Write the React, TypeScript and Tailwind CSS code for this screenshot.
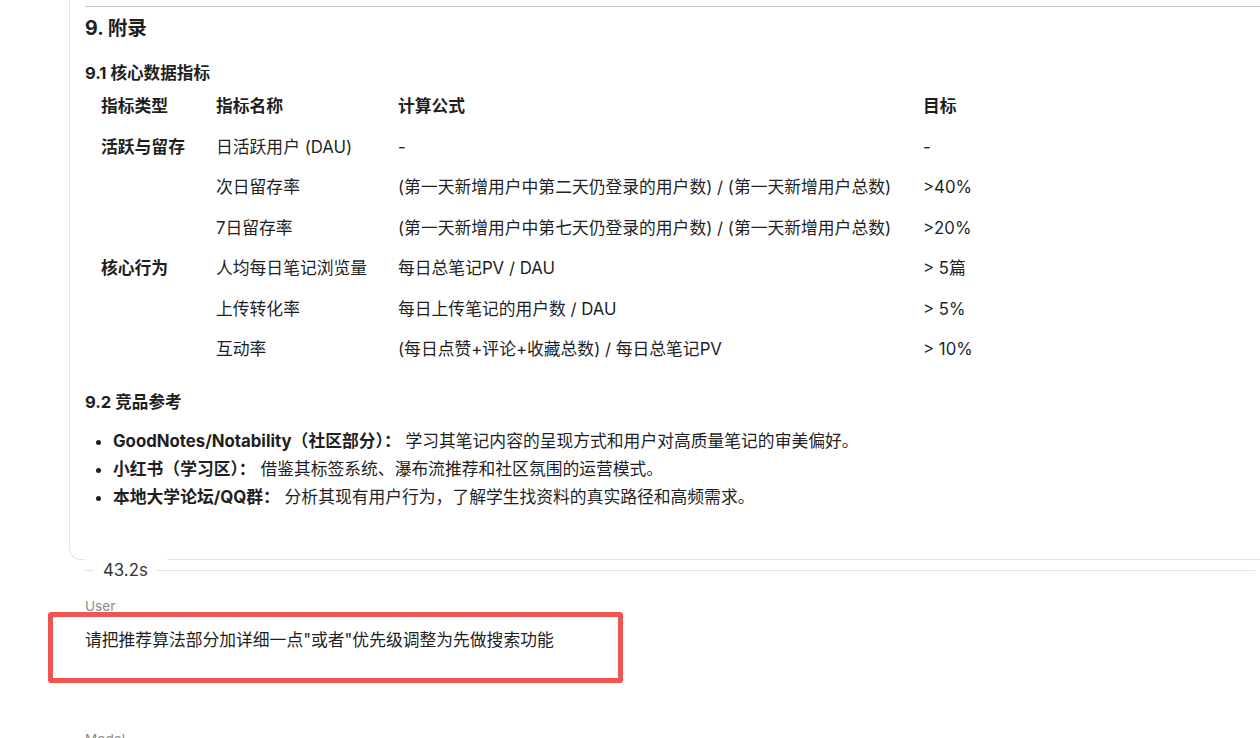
const rows = [
  { type: '活跃与留存', name: '日活跃用户 (DAU)', formula: '-', target: '-' },
  { type: '', name: '次日留存率', formula: '(第一天新增用户中第二天仍登录的用户数) / (第一天新增用户总数)', target: '>40%' },
  { type: '', name: '7日留存率', formula: '(第一天新增用户中第七天仍登录的用户数) / (第一天新增用户总数)', target: '>20%' },
  { type: '核心行为', name: '人均每日笔记浏览量', formula: '每日总笔记PV / DAU', target: '> 5篇' },
  { type: '', name: '上传转化率', formula: '每日上传笔记的用户数 / DAU', target: '> 5%' },
  { type: '', name: '互动率', formula: '(每日点赞+评论+收藏总数) / 每日总笔记PV', target: '> 10%' },
];

const competitors = [
  { title: 'GoodNotes/Notability（社区部分）：', text: '学习其笔记内容的呈现方式和用户对高质量笔记的审美偏好。' },
  { title: '小红书（学习区）：', text: '借鉴其标签系统、瀑布流推荐和社区氛围的运营模式。' },
  { title: '本地大学论坛/QQ群：', text: '分析其现有用户行为，了解学生找资料的真实路径和高频需求。' },
];

function Row({ cells, bold }: { cells: string[]; bold?: boolean }) {
  return (
    <div className="flex h-[40.5px] items-center pl-4">
      <div className="w-[115px] shrink-0 font-bold">{cells[0]}</div>
      <div className={`w-[182px] shrink-0 ${bold ? 'font-bold' : ''}`}>{cells[1]}</div>
      <div className={`w-[525px] shrink-0 ${bold ? 'font-bold' : ''}`}>{cells[2]}</div>
      <div className={bold ? 'font-bold' : ''}>{cells[3]}</div>
    </div>
  );
}

export default function App() {
  return (
    <div
      className="relative h-[738px] w-[1260px] overflow-hidden bg-white text-[#1f1f1f]"
      style={{ fontFamily: 'Inter, "Noto Sans CJK SC", sans-serif' }}
    >
      {/* response card, top cut off */}
      <div className="ml-[69px] -mr-4 rounded-bl-xl border-b border-l border-[#e3e3e3] pb-[48px] pl-[15px] pt-[6px]">
        <div className="border-t border-[#c8c8c8]" />
        <h2 className="mt-[7px] text-[19.6px] font-bold leading-7">9. 附录</h2>
        <h3 className="mt-[19px] text-[16.6px] font-bold leading-6">9.1 核心数据指标</h3>

        <div className="mt-px text-[16.8px] leading-6">
          <Row cells={['指标类型', '指标名称', '计算公式', '目标']} bold />
          {rows.map((r, i) => (
            <Row key={i} cells={[r.type, r.name, r.formula, r.target]} />
          ))}
        </div>

        <h3 className="mt-[20.5px] text-[16.6px] font-bold leading-6">9.2 竞品参考</h3>
        <ul className="mt-[13px] list-disc pl-7 text-[16.8px] leading-7">
          {competitors.map((c) => (
            <li key={c.title}>
              <span className="font-bold">{c.title}</span> {c.text}
            </li>
          ))}
        </ul>
      </div>

      {/* timing divider */}
      <div className="ml-[85px] mr-[5px] flex items-center">
        <div className="h-px w-[9px] bg-[#e3e3e3]" />
        <div className="relative bg-white px-[9px] text-[16.8px] leading-5 text-[#333]">
          <div className="absolute -left-[9px] -top-[10px] h-[10px] w-[82px] bg-white" />
          43.2s
        </div>
        <div className="h-px flex-1 bg-[#e3e3e3]" />
      </div>

      <div className="ml-[85px] mt-4 text-[13.6px] leading-5 text-[#8a8a8a]">User</div>
      <div className="ml-[85px] mt-3 text-[16.8px] leading-6">
        请把推荐算法部分加详细一点"或者"优先级调整为先做搜索功能
      </div>
      <div className="ml-[85px] mt-[77px] text-[13.6px] leading-5 text-[#8a8a8a]">Model</div>

      {/* annotation highlight */}
      <div className="absolute left-[48px] top-[612px] h-[71px] w-[575px] rounded-[3px] border-[5px] border-[#f25454]" />
    </div>
  );
}
